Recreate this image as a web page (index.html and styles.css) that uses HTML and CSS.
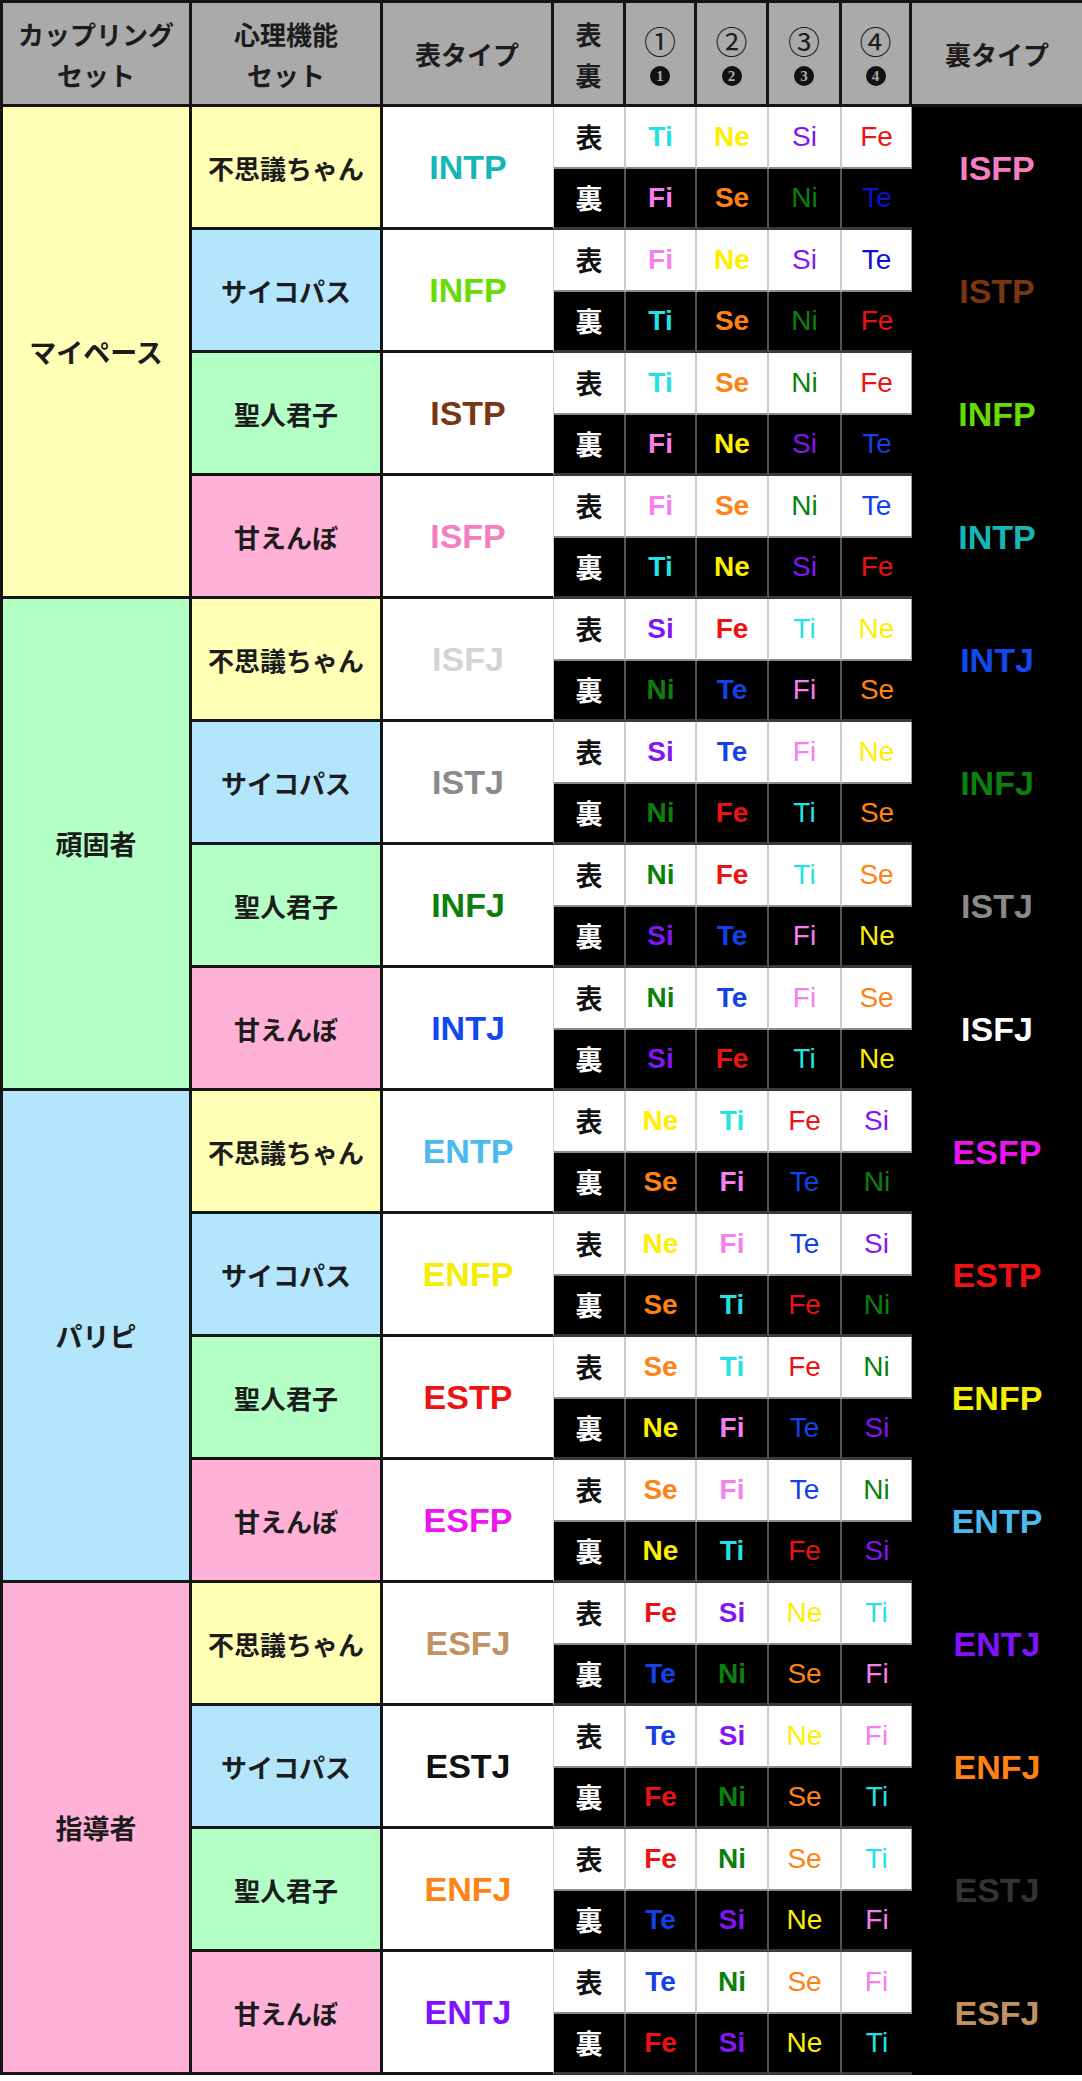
FILE: index.html
```html
<!DOCTYPE html>
<html lang="ja">
<head>
<meta charset="utf-8">
<title>カップリングセット表</title>
<link rel="stylesheet" href="styles.css">
</head>
<body>
<div class="grid">
  <div class="h h1">カップリング<br>セット</div>
  <div class="h">心理機能<br>セット</div>
  <div class="h">表タイプ</div>
  <div class="h">表<br>裏</div>
  <div class="h num"><span class="c1">①</span><span class="c2">1</span></div>
  <div class="h num"><span class="c1">②</span><span class="c2">2</span></div>
  <div class="h num"><span class="c1">③</span><span class="c2">3</span></div>
  <div class="h num"><span class="c1">④</span><span class="c2">4</span></div>
  <div class="h hl">裏タイプ</div>

  <!-- group 1 -->
  <div class="g yellow">マイペース</div>
  <div class="s yellow">不思議ちゃん</div>
  <div class="t INTP">INTP</div>
  <div class="lb">表</div><div class="f ft b Ti">Ti</div><div class="f ft b Ne">Ne</div><div class="f ft Si">Si</div><div class="f ft l Fe">Fe</div>
  <div class="u ISFP">ISFP</div>
  <div class="lu">裏</div><div class="f fu b Fi">Fi</div><div class="f fu b Se">Se</div><div class="f fu Ni">Ni</div><div class="f fu l Te dk">Te</div>

  <div class="s blue">サイコパス</div>
  <div class="t INFP">INFP</div>
  <div class="lb">表</div><div class="f ft b Fi">Fi</div><div class="f ft b Ne">Ne</div><div class="f ft Si">Si</div><div class="f ft l Te dk">Te</div>
  <div class="u ISTP">ISTP</div>
  <div class="lu">裏</div><div class="f fu b Ti">Ti</div><div class="f fu b Se">Se</div><div class="f fu Ni">Ni</div><div class="f fu l Fe">Fe</div>

  <div class="s green">聖人君子</div>
  <div class="t ISTP">ISTP</div>
  <div class="lb">表</div><div class="f ft b Ti">Ti</div><div class="f ft b Se">Se</div><div class="f ft Ni">Ni</div><div class="f ft l Fe">Fe</div>
  <div class="u INFP">INFP</div>
  <div class="lu">裏</div><div class="f fu b Fi">Fi</div><div class="f fu b Ne">Ne</div><div class="f fu Si">Si</div><div class="f fu l Te">Te</div>

  <div class="s pink">甘えんぼ</div>
  <div class="t ISFP">ISFP</div>
  <div class="lb">表</div><div class="f ft b Fi">Fi</div><div class="f ft b Se">Se</div><div class="f ft Ni">Ni</div><div class="f ft l Te">Te</div>
  <div class="u INTP">INTP</div>
  <div class="lu">裏</div><div class="f fu b Ti">Ti</div><div class="f fu b Ne">Ne</div><div class="f fu Si">Si</div><div class="f fu l Fe">Fe</div>

  <!-- group 2 -->
  <div class="g green">頑固者</div>
  <div class="s yellow">不思議ちゃん</div>
  <div class="t ISFJ">ISFJ</div>
  <div class="lb">表</div><div class="f ft b Si">Si</div><div class="f ft b Fe">Fe</div><div class="f ft Ti">Ti</div><div class="f ft l Ne">Ne</div>
  <div class="u INTJ">INTJ</div>
  <div class="lu">裏</div><div class="f fu b Ni">Ni</div><div class="f fu b Te">Te</div><div class="f fu Fi">Fi</div><div class="f fu l Se">Se</div>

  <div class="s blue">サイコパス</div>
  <div class="t ISTJ">ISTJ</div>
  <div class="lb">表</div><div class="f ft b Si">Si</div><div class="f ft b Te">Te</div><div class="f ft Fi">Fi</div><div class="f ft l Ne">Ne</div>
  <div class="u INFJ">INFJ</div>
  <div class="lu">裏</div><div class="f fu b Ni">Ni</div><div class="f fu b Fe">Fe</div><div class="f fu Ti">Ti</div><div class="f fu l Se">Se</div>

  <div class="s green">聖人君子</div>
  <div class="t INFJ">INFJ</div>
  <div class="lb">表</div><div class="f ft b Ni">Ni</div><div class="f ft b Fe">Fe</div><div class="f ft Ti">Ti</div><div class="f ft l Se">Se</div>
  <div class="u ISTJ">ISTJ</div>
  <div class="lu">裏</div><div class="f fu b Si">Si</div><div class="f fu b Te">Te</div><div class="f fu Fi">Fi</div><div class="f fu l Ne">Ne</div>

  <div class="s pink">甘えんぼ</div>
  <div class="t INTJ">INTJ</div>
  <div class="lb">表</div><div class="f ft b Ni">Ni</div><div class="f ft b Te">Te</div><div class="f ft Fi">Fi</div><div class="f ft l Se">Se</div>
  <div class="u ISFJ">ISFJ</div>
  <div class="lu">裏</div><div class="f fu b Si">Si</div><div class="f fu b Fe">Fe</div><div class="f fu Ti">Ti</div><div class="f fu l Ne">Ne</div>

  <!-- group 3 -->
  <div class="g blue">パリピ</div>
  <div class="s yellow">不思議ちゃん</div>
  <div class="t ENTP">ENTP</div>
  <div class="lb">表</div><div class="f ft b Ne">Ne</div><div class="f ft b Ti">Ti</div><div class="f ft Fe">Fe</div><div class="f ft l Si">Si</div>
  <div class="u ESFP">ESFP</div>
  <div class="lu">裏</div><div class="f fu b Se">Se</div><div class="f fu b Fi">Fi</div><div class="f fu Te">Te</div><div class="f fu l Ni">Ni</div>

  <div class="s blue">サイコパス</div>
  <div class="t ENFP">ENFP</div>
  <div class="lb">表</div><div class="f ft b Ne">Ne</div><div class="f ft b Fi">Fi</div><div class="f ft Te">Te</div><div class="f ft l Si">Si</div>
  <div class="u ESTP">ESTP</div>
  <div class="lu">裏</div><div class="f fu b Se">Se</div><div class="f fu b Ti">Ti</div><div class="f fu Fe">Fe</div><div class="f fu l Ni">Ni</div>

  <div class="s green">聖人君子</div>
  <div class="t ESTP">ESTP</div>
  <div class="lb">表</div><div class="f ft b Se">Se</div><div class="f ft b Ti">Ti</div><div class="f ft Fe">Fe</div><div class="f ft l Ni">Ni</div>
  <div class="u ENFP">ENFP</div>
  <div class="lu">裏</div><div class="f fu b Ne">Ne</div><div class="f fu b Fi">Fi</div><div class="f fu Te">Te</div><div class="f fu l Si">Si</div>

  <div class="s pink">甘えんぼ</div>
  <div class="t ESFP">ESFP</div>
  <div class="lb">表</div><div class="f ft b Se">Se</div><div class="f ft b Fi">Fi</div><div class="f ft Te">Te</div><div class="f ft l Ni">Ni</div>
  <div class="u ENTP">ENTP</div>
  <div class="lu">裏</div><div class="f fu b Ne">Ne</div><div class="f fu b Ti">Ti</div><div class="f fu Fe">Fe</div><div class="f fu l Si">Si</div>

  <!-- group 4 -->
  <div class="g pink">指導者</div>
  <div class="s yellow">不思議ちゃん</div>
  <div class="t ESFJ">ESFJ</div>
  <div class="lb">表</div><div class="f ft b Fe">Fe</div><div class="f ft b Si">Si</div><div class="f ft Ne">Ne</div><div class="f ft l Ti">Ti</div>
  <div class="u ENTJ">ENTJ</div>
  <div class="lu">裏</div><div class="f fu b Te">Te</div><div class="f fu b Ni">Ni</div><div class="f fu Se">Se</div><div class="f fu l Fi">Fi</div>

  <div class="s blue">サイコパス</div>
  <div class="t ESTJ">ESTJ</div>
  <div class="lb">表</div><div class="f ft b Te">Te</div><div class="f ft b Si">Si</div><div class="f ft Ne">Ne</div><div class="f ft l Fi">Fi</div>
  <div class="u ENFJ">ENFJ</div>
  <div class="lu">裏</div><div class="f fu b Fe">Fe</div><div class="f fu b Ni">Ni</div><div class="f fu Se">Se</div><div class="f fu l Ti">Ti</div>

  <div class="s green">聖人君子</div>
  <div class="t ENFJ">ENFJ</div>
  <div class="lb">表</div><div class="f ft b Fe">Fe</div><div class="f ft b Ni">Ni</div><div class="f ft Se">Se</div><div class="f ft l Ti">Ti</div>
  <div class="u ESTJ">ESTJ</div>
  <div class="lu">裏</div><div class="f fu b Te">Te</div><div class="f fu b Si">Si</div><div class="f fu Ne">Ne</div><div class="f fu l Fi">Fi</div>

  <div class="s pink">甘えんぼ</div>
  <div class="t ENTJ">ENTJ</div>
  <div class="lb">表</div><div class="f ft b Te">Te</div><div class="f ft b Ni">Ni</div><div class="f ft Se">Se</div><div class="f ft l Fi">Fi</div>
  <div class="u ESFJ">ESFJ</div>
  <div class="lu">裏</div><div class="f fu b Fe">Fe</div><div class="f fu b Si">Si</div><div class="f fu Ne">Ne</div><div class="f fu l Ti">Ti</div>
</div>
</body>
</html>
```
FILE: styles.css
```css
* { box-sizing: border-box; }
html, body { margin: 0; padding: 0; background: #ffffff; }
body {
  font-family: "Liberation Sans", "Noto Sans CJK JP", sans-serif;
  color: #1a1a1a;
}
.grid {
  display: grid;
  grid-template-columns: 192px 191px 171px 72px 71px 72px 73px 70px 1fr;
  grid-template-rows: 107px repeat(32, 61.5px);
  width: 1082px;
}
.grid > div {
  display: flex;
  align-items: center;
  justify-content: center;
  text-align: center;
}

/* header */
.h {
  background: #aaaaaa;
  border-top: 3px solid #151515;
  border-right: 3px solid #151515;
  border-bottom: 3px solid #151515;
  font-family: "Noto Sans CJK JP", sans-serif;
  font-weight: 700;
  font-size: 26px;
  line-height: 41px;
  color: #1c1c1c;
}
.h1 { border-left: 3px solid #151515; }
.hl { border-right: none; }
.grid > .num {
  flex-direction: column;
  gap: 9px;
  padding-top: 2px;
}
.num .c1 {
  display: block;
  font-family: "Noto Sans CJK JP", sans-serif;
  font-weight: 400;
  font-size: 32px;
  line-height: 34px;
  height: 34px;
}
.num .c2 {
  display: flex;
  align-items: center;
  justify-content: center;
  width: 20px;
  height: 20px;
  border-radius: 50%;
  background: #111111;
  color: #aaaaaa;
  font-family: "Liberation Serif", serif;
  font-weight: 700;
  font-size: 15px;
  line-height: 1;
}

/* group / subset */
.g, .s {
  font-family: "Noto Sans CJK JP", sans-serif;
  font-weight: 700;
  color: #1c1c1c;
  border-right: 3px solid #151515;
  border-bottom: 3px solid #151515;
}
.g {
  grid-row: span 8;
  border-left: 3px solid #151515;
  font-size: 27px;
}
.s {
  grid-row: span 2;
  font-size: 26px;
}
.yellow { background: #ffffb5; }
.blue { background: #b3e5fc; }
.green { background: #b3ffc6; }
.pink { background: #ffb1d8; }

/* type cells */
.t, .u {
  grid-row: span 2;
  font-weight: 700;
  font-size: 34px;
}
.t {
  background: #ffffff;
  border-bottom: 3px solid #151515;
  border-right: 1px solid #cfcfcf;
}
.u {
  background: #000000;
}

/* 表 / 裏 labels */
.lb, .lu {
  font-family: "Noto Sans CJK JP", sans-serif;
  font-weight: 700;
  font-size: 27px;
}
.lb {
  background: #ffffff;
  color: #111111;
  border-right: 2px solid #cccccc;
  border-bottom: 2px solid #8a8a8a;
}
.lu {
  background: #000000;
  color: #ffffff;
  border-right: 2px solid #555555;
  border-bottom: 3px solid #3a3a3a;
}

/* function cells */
.f {
  font-size: 28px;
  font-weight: 400;
}
.f.b { font-weight: 700; }
.ft {
  background: #ffffff;
  border-right: 2px solid #cccccc;
  border-bottom: 2px solid #8a8a8a;
}
.fu {
  background: #000000;
  border-right: 2px solid #555555;
  border-bottom: 3px solid #3a3a3a;
}
.ft.l { border-right: 1px solid #9a9a9a; }
.fu.l { border-right: none; }

.Ti { color: #22e2e2; }
.Ne { color: #ffee00; }
.Si { color: #8414f4; }
.Fe { color: #ec1212; }
.Fi { color: #f67ef0; }
.Se { color: #ff8214; }
.Ni { color: #0c800c; }
.Te { color: #1242e6; }
.Te.dk { color: #0a12cc; }

/* type colors */
.INTP { color: #14b6b6; }
.INFP { color: #66dc02; }
.ISTP { color: #7a3512; }
.ISFP { color: #f47ec2; }
.ISFJ { color: #d4d4d4; }
.u.ISFJ { color: #ffffff; }
.ISTJ { color: #8a8a8a; }
.INFJ { color: #0c800c; }
.INTJ { color: #1248ee; }
.ENTP { color: #4cbaee; }
.ENFP { color: #f4ee00; }
.ESTP { color: #ee1212; }
.ESFP { color: #ee14ee; }
.ESFJ { color: #c09262; }
.ESTJ { color: #111111; }
.u.ESTJ { color: #333333; }
.ENFJ { color: #ff8214; }
.ENTJ { color: #8012ff; }
```
